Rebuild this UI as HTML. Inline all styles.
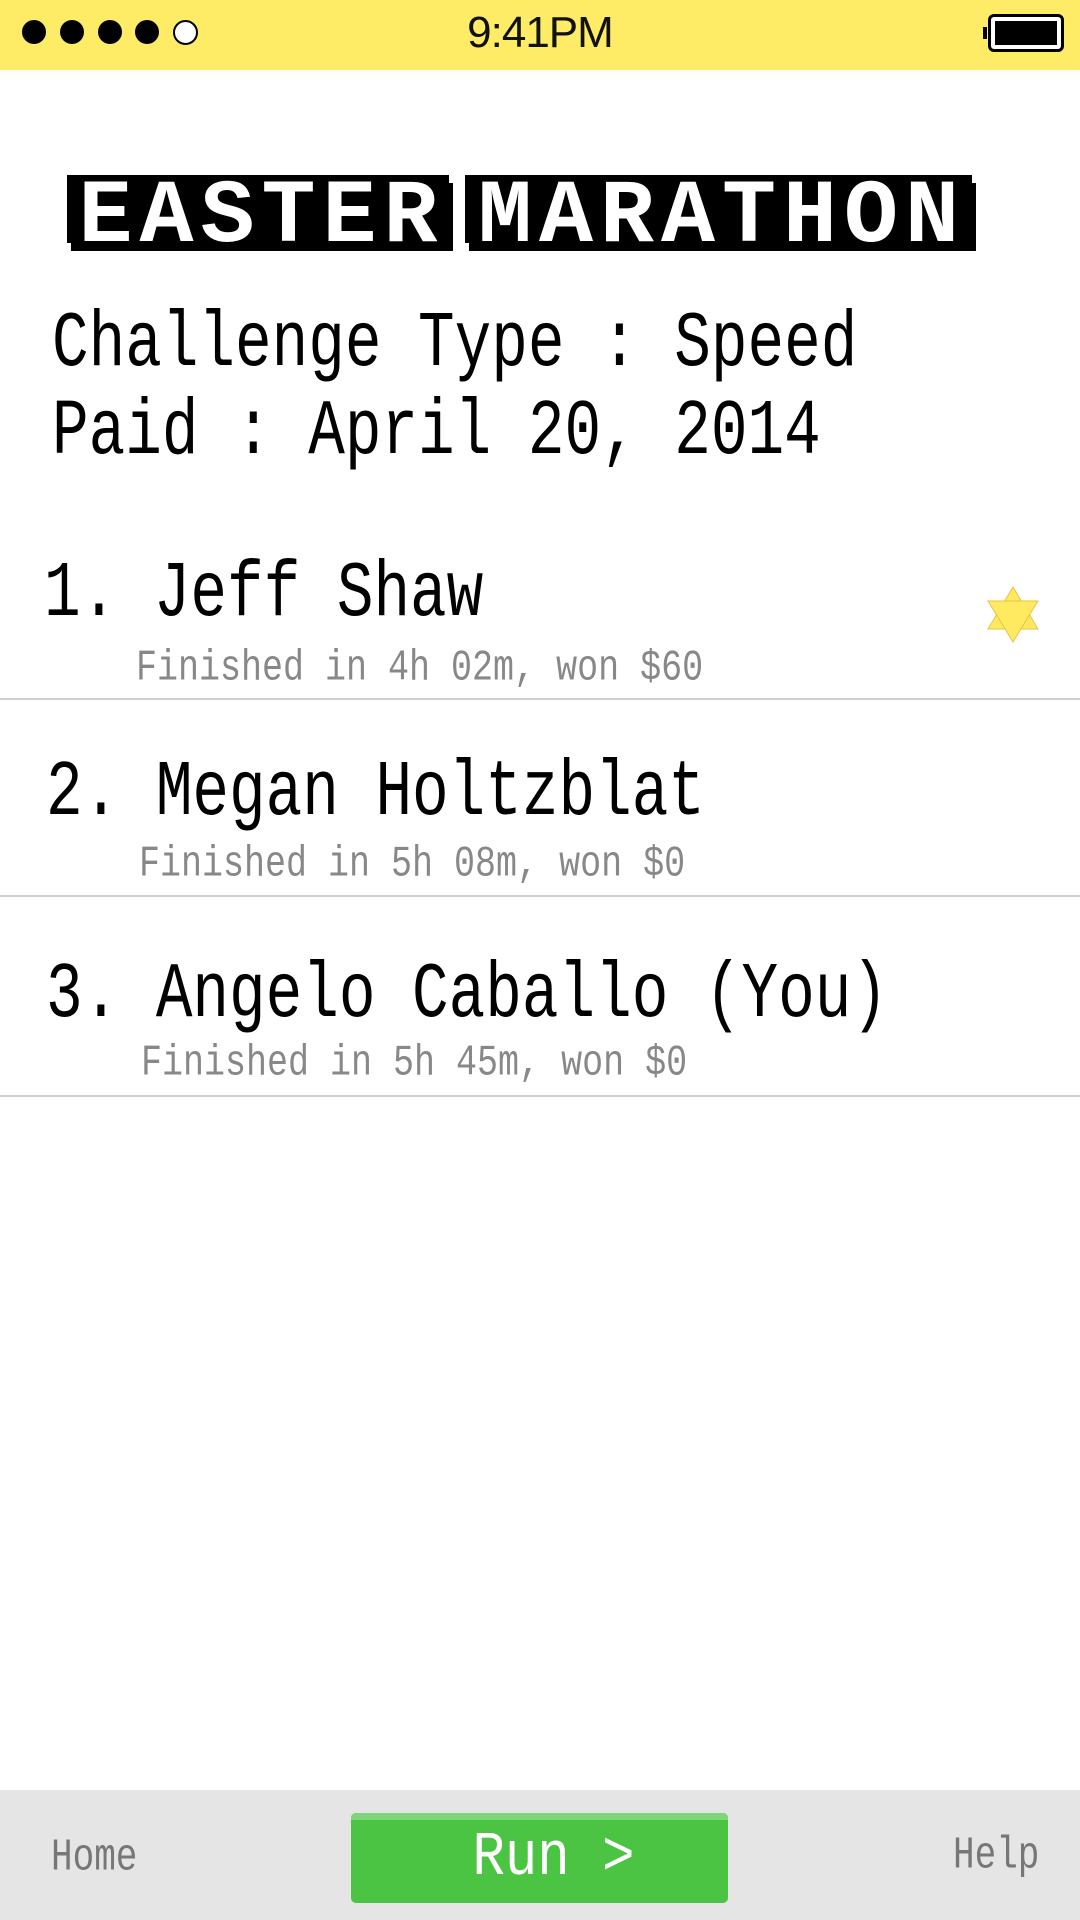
<!DOCTYPE html>
<html><head><meta charset="utf-8"><style>
html,body{margin:0;padding:0;width:1080px;height:1920px;background:#fff;overflow:hidden;position:relative;font-family:"Liberation Mono",monospace}
.abs{position:absolute;white-space:nowrap}
.sb{position:absolute;left:0;top:0;width:1080px;height:70px;background:#FFEC66}
.dot{position:absolute;top:20px;width:24px;height:24px;border-radius:50%;background:#000}
.time{position:absolute;left:0;width:1080px;top:8px;text-align:center;font-family:"Liberation Sans",sans-serif;font-size:44px;color:#111;letter-spacing:-1px}
.tbox{position:absolute;top:175px;height:68px;background:#000;box-shadow:4px 8px 0 #000;overflow:hidden}
.tbox span{position:absolute;left:0;right:0;top:-8px;text-align:center;font-size:90px;font-weight:bold;color:#fff;letter-spacing:7px;text-indent:7px}
.big{font-size:61px;color:#000;transform:scaleY(1.3);transform-origin:0 0}
.sub{font-size:35px;color:#888;transform:scaleY(1.25);transform-origin:0 0}
.hr{position:absolute;left:0;width:1080px;height:2px;background:#cfcfcf}
</style></head><body>
<div class="sb"></div>
<div class="dot" style="left:22px"></div><div class="dot" style="left:60px"></div><div class="dot" style="left:98px"></div><div class="dot" style="left:135px"></div>
<div class="dot" style="left:173px;background:#fff;border:2px solid #000;width:21px;height:21px"></div>
<div class="time">9:41PM</div>
<div style="position:absolute;left:983px;top:27px;width:4px;height:12px;background:#000"></div>
<div style="position:absolute;left:988px;top:14px;width:70px;height:32px;border:3px solid #000;border-radius:6px;background:#fff"></div>
<div style="position:absolute;left:995px;top:21px;width:62px;height:24px;background:#000"></div>

<div class="tbox" style="left:67px;width:382px"><span>EASTER</span></div>
<div class="tbox" style="left:465px;width:507px"><span>MARATHON</span></div>

<div class="abs big" style="left:52px;top:300px">Challenge Type : Speed</div>
<div class="abs big" style="left:52px;top:388px">Paid : April 20, 2014</div>

<div class="abs big" style="left:44px;top:550px">1. Jeff Shaw</div>
<div class="abs sub" style="left:136px;top:643px">Finished in 4h 02m, won $60</div>
<svg class="abs" style="left:985px;top:584px" width="58" height="62" viewBox="985 584 58 62">
<polygon points="1013,587 1038,629 988,629" fill="#FFE95E" stroke="#E8C24A" stroke-width="1"/>
<polygon points="988,601 1038,601 1013,642" fill="#FFEA60" stroke="#E8C24A" stroke-width="1"/>
</svg>
<div class="hr" style="top:698px"></div>

<div class="abs big" style="left:46px;top:749px">2. Megan Holtzblat</div>
<div class="abs sub" style="left:139px;top:839px">Finished in 5h 08m, won $0</div>
<div class="hr" style="top:895px"></div>

<div class="abs big" style="left:46px;top:951px">3. Angelo Caballo (You)</div>
<div class="abs sub" style="left:141px;top:1038px">Finished in 5h 45m, won $0</div>
<div class="hr" style="top:1095px"></div>

<div style="position:absolute;left:0;top:1790px;width:1080px;height:130px;background:#e5e5e5"></div>
<div class="abs sub" style="left:51px;top:1832px;color:#777;font-size:36px">Home</div>
<div class="abs sub" style="left:953px;top:1830px;color:#777;font-size:36px">Help</div>
<div style="position:absolute;left:351px;top:1813px;width:377px;height:90px;background:#4CC443;border-radius:5px;overflow:hidden">
<div style="height:7px;background:#7DD67A"></div></div>
<div class="abs" style="left:365px;width:377px;top:1828px;text-align:center;font-size:54px;color:#fff;transform:scaleY(1.15)">Run &gt;</div>
</body></html>
